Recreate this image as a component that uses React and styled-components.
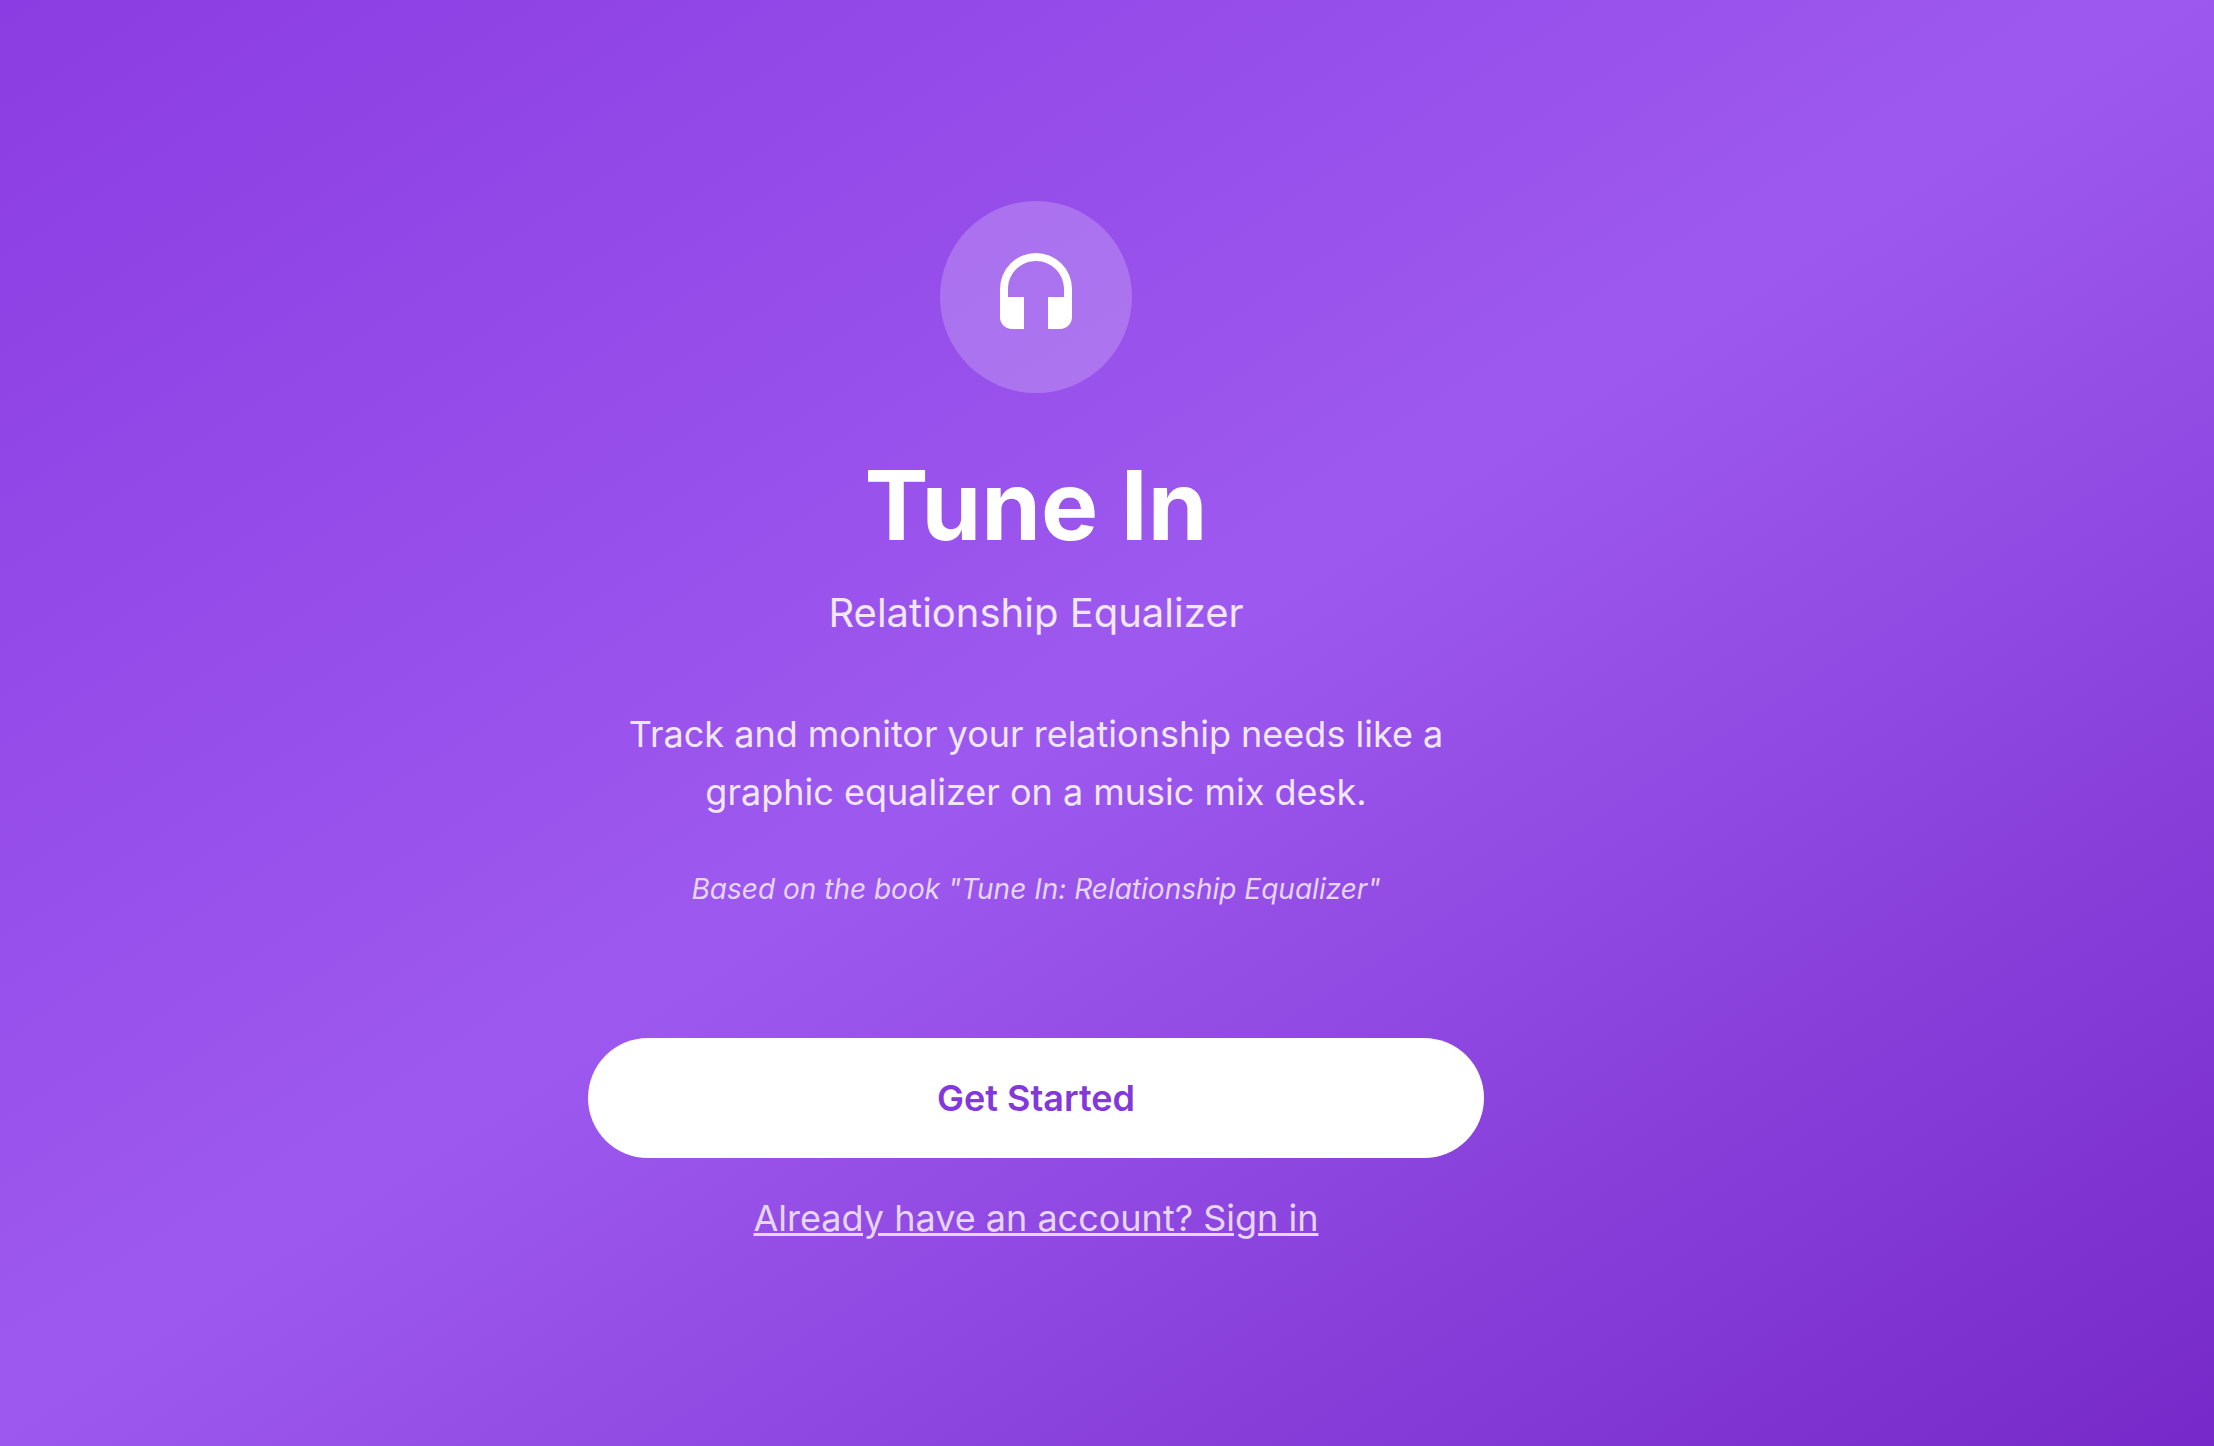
import React from "react";
import styled, {createGlobalStyle} from "styled-components";
import {MdHeadset} from "react-icons/md";

const Colors = {
  violet: "#8b3ce2",
  lightViolet: "#9d59ef",
  darkViolet: "#7629c8",
  action: "#8338dc",
  white: "#ffffff",
  lavender: "#f1e7fd",
  softLavender: "#e7d6fb"
};

export default function App() {
  return <>
    <GlobalStyle/>
    <Page>
      <Content>
        <IconCircle>
          <MdHeadset size={96}/>
        </IconCircle>
        <Title>Tune In</Title>
        <Subtitle>Relationship Equalizer</Subtitle>
        <Description>
          Track and monitor your relationship needs like a graphic equalizer on a music mix desk.
        </Description>
        <Credit>Based on the book "Tune In: Relationship Equalizer"</Credit>
        <Actions>
          <StartButton type="button">Get Started</StartButton>
          <SignInLink href="#sign-in">Already have an account? Sign in</SignInLink>
        </Actions>
      </Content>
    </Page>
  </>
}

const GlobalStyle = createGlobalStyle`
  * {
    box-sizing: border-box;
  }

  body {
    margin: 0;
    font-family: Inter, "Liberation Sans", sans-serif;
  }
`;

const Page = styled.main`
  min-height: 100vh;
  display: flex;
  align-items: center;
  justify-content: center;
  padding: 48px 142px 48px 0;
  color: ${Colors.white};
  background: linear-gradient(to bottom right, ${Colors.violet} 0%, ${Colors.lightViolet} 49%, ${Colors.darkViolet} 100%);
`;

const Content = styled.section`
  width: 100%;
  max-width: 896px;
  display: flex;
  flex-direction: column;
  align-items: center;
  text-align: center;
`;

const IconCircle = styled.div`
  width: 192px;
  height: 192px;
  display: flex;
  align-items: center;
  justify-content: center;
  border-radius: 50%;
  background-color: rgba(255, 255, 255, 0.2);
`;

const Title = styled.h1`
  margin: 64px 0 0;
  font-size: 96px;
  font-weight: 700;
  line-height: 96px;
`;

const Subtitle = styled.p`
  margin: 32px 0 0;
  color: ${Colors.lavender};
  font-size: 40px;
  line-height: 56px;
`;

const Description = styled.p`
  margin: 64px 0 0;
  color: ${Colors.lavender};
  font-size: 36px;
  line-height: 58px;
`;

const Credit = styled.p`
  margin: 48px 0 0;
  color: ${Colors.softLavender};
  font-size: 28px;
  font-style: italic;
  line-height: 41px;
`;

const Actions = styled.div`
  width: 100%;
  margin-top: 128px;
  display: flex;
  flex-direction: column;
  align-items: center;
  gap: 32px;
`;

const StartButton = styled.button`
  width: 100%;
  height: 120px;
  border: none;
  border-radius: 60px;
  color: ${Colors.action};
  background-color: ${Colors.white};
  font-family: inherit;
  font-size: 36px;
  font-weight: 600;
  cursor: pointer;
`;

const SignInLink = styled.a`
  color: ${Colors.softLavender};
  font-size: 36px;
  line-height: 56px;
  text-decoration: underline;
`;
